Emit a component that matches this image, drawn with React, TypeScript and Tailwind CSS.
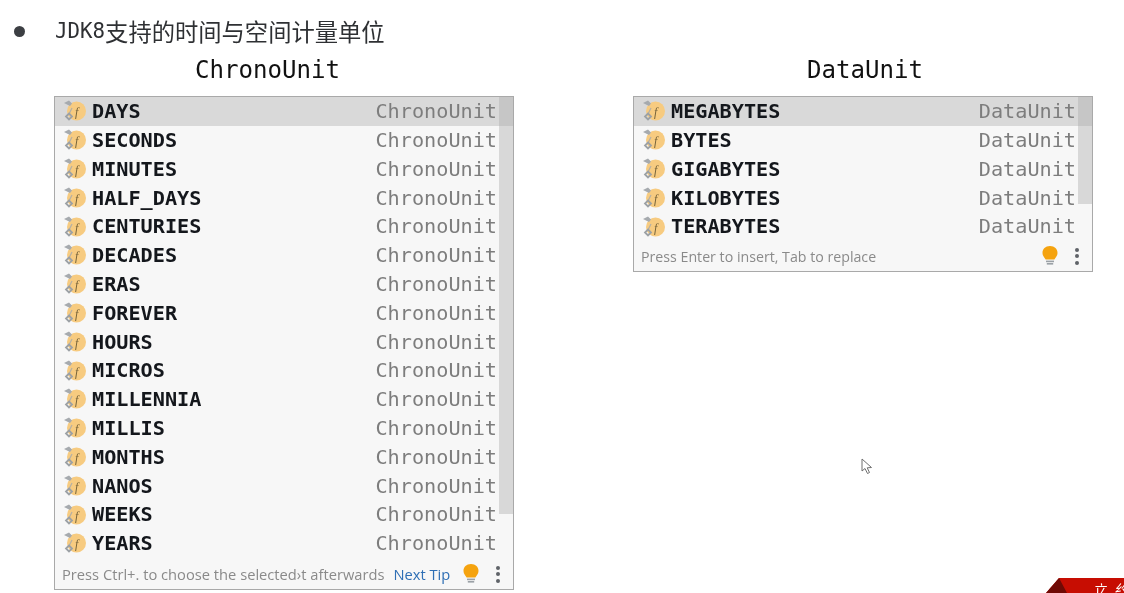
const MONO = "font-['DejaVu_Sans_Mono','Noto_Sans_CJK_SC',monospace]";

function FieldIcon() {
  return (
    <svg width="23" height="22" viewBox="0 0 23 22" className="shrink-0">
      <circle cx="13.5" cy="11" r="9.5" fill="#f7cb80" />
      <path d="M1 3 L6 0.5 L9 3.5 L7 6 Z" fill="#a6aaae" />
      <path d="M9 8 L6.5 13" stroke="#b5b0a4" strokeWidth="1.3" />
      <path d="M6 13.5 L9 16.5 L6 19.5 L3 16.5 Z" fill="none" stroke="#9ca1a5" strokeWidth="1.8" />
      <text x="13.6" y="15.5" textAnchor="middle" fontSize="12" fontFamily="'Liberation Serif', serif" fontStyle="italic" fill="#75633a">f</text>
    </svg>
  );
}

function Bulb() {
  return (
    <svg width="18" height="22" viewBox="0 0 18 22" className="shrink-0">
      <path d="M9 1 C4.4 1 1.5 4.2 1.5 8 C1.5 11 3.4 12.4 4.6 14.4 L13.4 14.4 C14.6 12.4 16.5 11 16.5 8 C16.5 4.2 13.6 1 9 1 Z" fill="#f5a30f" />
      <rect x="5" y="15.6" width="8" height="1.6" fill="#9ba1a6" />
      <rect x="5.8" y="18" width="6.4" height="1.6" fill="#9ba1a6" />
    </svg>
  );
}

function Dots() {
  return (
    <div className="flex flex-col gap-[2.5px] w-[4px] shrink-0">
      <span className="w-[4px] h-[4px] rounded-full bg-[#5f6368]" />
      <span className="w-[4px] h-[4px] rounded-full bg-[#5f6368]" />
      <span className="w-[4px] h-[4px] rounded-full bg-[#5f6368]" />
    </div>
  );
}

function Popup({ items, type, thumb, footer }: { items: string[]; type: string; thumb: string; footer: React.ReactNode }) {
  return (
    <div className="relative w-[460px] border border-[#a9a9a9] bg-[#f7f7f7] box-border">
      <div className="flex flex-col">
        {items.map((it, i) => (
          <div key={it} className={`flex items-center h-[28.8px] pl-[8px] pr-[16px] ${i === 0 ? "bg-[#d9d9d9]" : ""}`}>
            <FieldIcon />
            <span className={`ml-[6px] text-[20.2px] font-bold text-[#14171c] ${MONO}`}>{it}</span>
            <span className={`ml-auto text-[20.2px] text-[#7d7d7d] ${MONO}`}>{type}</span>
          </div>
        ))}
      </div>
      <div className={`absolute top-0 right-0 w-[14px] bg-[#d8d8d8] ${thumb}`}>
        <div className="h-[29px] bg-[#c6c6c6]" />
      </div>
      {footer}
    </div>
  );
}

const chrono = ["DAYS","SECONDS","MINUTES","HALF_DAYS","CENTURIES","DECADES","ERAS","FOREVER","HOURS","MICROS","MILLENNIA","MILLIS","MONTHS","NANOS","WEEKS","YEARS"];
const data = ["MEGABYTES","BYTES","GIGABYTES","KILOBYTES","TERABYTES"];

export default function App() {
  return (
    <div className="relative w-[1124px] h-[593px] overflow-hidden bg-white blur-[0.4px]">
      <div className="flex items-center h-[24px] mt-[19px] pl-[14px]">
        <span className="w-[11px] h-[11px] rounded-full bg-[#3c3f43]" />
        <span className={`ml-[30px] text-[20.8px] leading-[24px] text-[#2e3033] ${MONO}`}>JDK8</span>
        <span className="text-[23.3px] leading-[24px] text-[#2e3033] font-['Noto_Sans_CJK_SC',sans-serif]">支持的时间与空间计量单位</span>
      </div>
      <div className="flex gap-[119px] pl-[54px] mt-[10px]">
        <div className="flex flex-col">
          <div className={`h-[43px] pt-[2px] pl-[141px] text-[24.1px] leading-[30px] text-[#111] ${MONO}`}>ChronoUnit</div>
          <Popup
            items={chrono}
            type="ChronoUnit"
            thumb="h-[417px]"
            footer={
              <div className="flex items-center h-[31px] pt-[2px] pl-[7px] pr-[13px] font-['Open_Sans',sans-serif] text-[14.7px]">
                <span className="text-[#8a8a8a] whitespace-nowrap">Press Ctrl+. to choose the selected›t afterwards</span>
                <span className="ml-[9px] text-[#2f6fb5] whitespace-nowrap">Next Tip</span>
                <span className="ml-auto"><Bulb /></span>
                <span className="ml-[16px]"><Dots /></span>
              </div>
            }
          />
        </div>
        <div className="flex flex-col">
          <div className={`h-[43px] pt-[2px] pl-[174px] text-[24.1px] leading-[30px] text-[#111] ${MONO}`}>DataUnit</div>
          <Popup
            items={data}
            type="DataUnit"
            thumb="h-[107px]"
            footer={
              <div className="flex items-center h-[30px] pt-[1px] pl-[7px] pr-[13px] font-['Open_Sans',sans-serif] text-[14.2px]">
                <span className="text-[#8a8a8a] whitespace-nowrap">Press Enter to insert, Tab to replace</span>
                <span className="ml-auto"><Bulb /></span>
                <span className="ml-[16px]"><Dots /></span>
              </div>
            }
          />
        </div>
      </div>

      <svg width="14" height="17" viewBox="0 0 14 17" className="absolute left-[861px] top-[458px]">
        <path d="M1 1 L1 13 L4 10.5 L6.5 15.5 L8.5 14.5 L6.2 9.8 L10.5 9.5 Z" fill="#fff" stroke="#6f6f6f" strokeWidth="1" />
      </svg>

      <div className="absolute left-[1046px] top-[578px] w-[78px] h-[15px] overflow-hidden">
        <svg width="78" height="15" viewBox="0 0 78 15" className="block">
          <path d="M0 15 L13 0 L78 0 L78 15 Z" fill="#c70d02" />
          <path d="M0 15 L13 0 L21 15 Z" fill="#6f0a05" />
        </svg>
        <span className="absolute left-[46px] top-[2px] text-[14px] leading-[18px] italic text-white font-['Noto_Sans_CJK_SC',sans-serif]">立</span>
        <span className="absolute left-[68px] top-[2px] text-[14px] leading-[18px] italic text-white font-['Noto_Sans_CJK_SC',sans-serif]">约</span>
      </div>
    </div>
  );
}
